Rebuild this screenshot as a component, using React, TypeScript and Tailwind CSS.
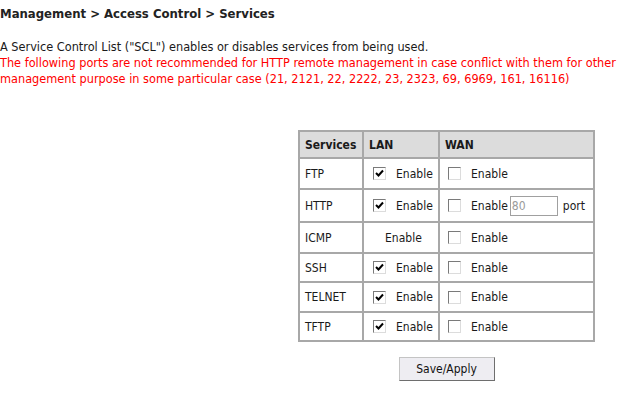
import React from "react";

const font = { fontFamily: '"DejaVu Sans Condensed", "DejaVu Sans", Tahoma, sans-serif' };

function Box({ checked }: { checked?: boolean }) {
  return (
    <span className="inline-flex h-[13px] w-[13px] shrink-0 items-center justify-center border border-t-[#7a7a7a] border-l-[#7a7a7a] border-b-[#dcdcdc] border-r-[#dcdcdc] bg-white">
      {checked && (
        <svg width="9" height="9" viewBox="0 0 9 9">
          <path d="M1 4 L3.5 6.5 L8 1.5" stroke="#000" strokeWidth="2" fill="none" />
        </svg>
      )}
    </span>
  );
}

function Toggle({ checked }: { checked?: boolean }) {
  return (
    <span className="flex items-center">
      <Box checked={checked} />
      <span className="ml-[10px]">Enable</span>
    </span>
  );
}

const rows = [
  { name: "FTP", lan: true, h: "h-[31px]" },
  { name: "HTTP", lan: true, h: "h-[33px]", port: true },
  { name: "ICMP", lan: null, h: "h-[31px]" },
  { name: "SSH", lan: true, h: "h-[29px]" },
  { name: "TELNET", lan: true, h: "h-[30px]" },
  { name: "TFTP", lan: true, h: "h-[29px]" },
];

const cell = "border border-[#a8a8a8] px-[5px]";

export default function App() {
  return (
    <div className="h-[404px] w-[640px] bg-white text-[12px] text-[#1a1a1a]" style={font}>
      <div className="pt-[6px] text-[13px] font-bold leading-[16px] text-[#222]">
        Management &gt; Access Control &gt; Services
      </div>
      <div className="mt-[17px] text-[12.6px] leading-[16px]">
        <p>A Service Control List ("SCL") enables or disables services from being used.</p>
        <p className="text-[#ff0000]">
          The following ports are not recommended for HTTP remote management in case conflict with them for other
          management purpose in some particular case (21, 2121, 22, 2222, 23, 2323, 69, 6969, 161, 16116)
        </p>
      </div>
      <div className="ml-[298px] mt-[43px] inline-flex flex-col items-center">
        <table className="border border-[#a8a8a8]" style={{ borderCollapse: "separate", borderSpacing: 0 }}>
          <thead>
            <tr className="h-[27px] bg-[#dcdcdc] text-left font-bold">
              <th className={`${cell} w-[64px]`}>Services</th>
              <th className={`${cell} w-[76px]`}>LAN</th>
              <th className={`${cell} w-[155px]`}>WAN</th>
            </tr>
          </thead>
          <tbody>
            {rows.map((r) => (
              <tr key={r.name} className={r.h}>
                <td className={cell}>{r.name}</td>
                <td className={`${cell} pl-[9px]`}>
                  {r.lan === null ? (
                    <span className="block pl-[12px]">Enable</span>
                  ) : (
                    <Toggle checked={r.lan} />
                  )}
                </td>
                <td className={`${cell} pl-[8px]`}>
                  <span className="flex items-center">
                    <Toggle />
                    {r.port && (
                      <>
                        <span className="ml-[2px] flex h-[20px] w-[48px] items-center border border-[#a0a0a0] bg-white pl-[1px] text-[#9a9a9a]">
                          80
                        </span>
                        <span className="ml-[5px]">port</span>
                      </>
                    )}
                  </span>
                </td>
              </tr>
            ))}
          </tbody>
        </table>
        <button className="mt-[15px] h-[24px] w-[96px] border border-[#c4c4c4] border-b-[#6e6e6e] border-r-[#6e6e6e] bg-[#eeedf2] text-[12px] text-[#111]">
          Save/Apply
        </button>
      </div>
    </div>
  );
}
